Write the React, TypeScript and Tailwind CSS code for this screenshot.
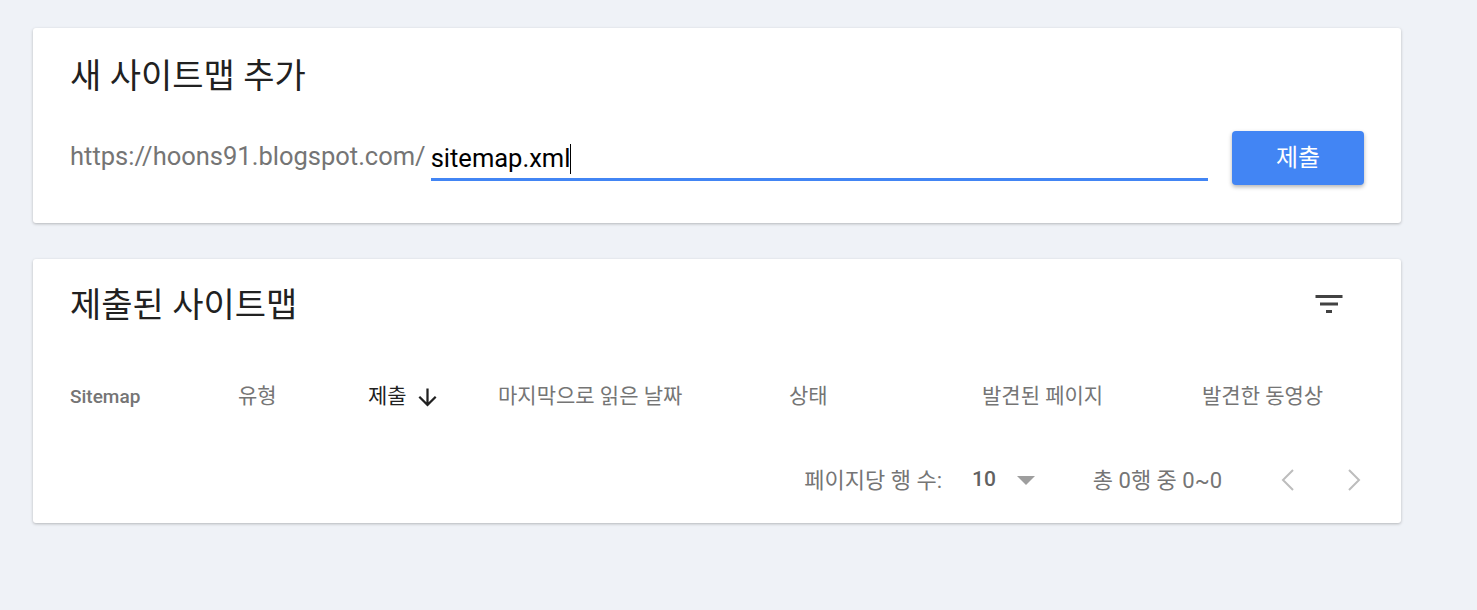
import React from 'react';

const font = { fontFamily: 'Roboto, "Noto Sans CJK KR", sans-serif' };

const columns = [
  { label: 'Sitemap', className: 'text-[19px] font-medium text-[#757575]' },
  { label: '유형', className: 'text-[21px] text-[#757575]' },
  { label: '제출', className: 'text-[21px] text-[#212121]', sorted: true },
  { label: '마지막으로 읽은 날짜', className: 'text-[21px] text-[#757575]' },
  { label: '상태', className: 'text-[21px] text-[#757575]' },
  { label: '발견된 페이지', className: 'text-[21px] text-[#757575]' },
  { label: '발견한 동영상', className: 'text-[21px] text-[#757575]' },
];

function FilterIcon() {
  return (
    <svg viewBox="0 0 24 24" className="h-9 w-9" fill="#424242">
      <path d="M10 18h4v-2h-4v2zM3 6v2h18V6H3zm3 7h12v-2H6v2z" />
    </svg>
  );
}

function Chevron({ dir }: { dir: 'left' | 'right' }) {
  return (
    <svg viewBox="0 0 14 22" className="h-[22px] w-[14px]" fill="none" stroke="#bdbdbd" strokeWidth={2}>
      {dir === 'left' ? <path d="M12 1L2 11l10 10" /> : <path d="M2 1l10 10L2 21" />}
    </svg>
  );
}

export default function App() {
  return (
    <div className="min-h-screen bg-[#eff2f7] pl-[33px] pt-[28px]" style={font}>
      <div className="w-[1368px] h-[195px] bg-white rounded-[3px] shadow-[0_1px_3px_rgba(0,0,0,0.25)] px-[37px] pt-[28px]">
        <h2 className="text-[34px] leading-[40px] text-[#212121]">새 사이트맵 추가</h2>
        <div className="mt-[35px] flex items-center h-[54px]">
          <span className="text-[25.5px] text-[#757575] leading-none mt-[-2px]">https://hoons91.blogspot.com/</span>
          <div className="ml-[5px] flex-1 h-[44px] border-b-[3px] border-[#4285f4] flex items-center mt-[2px]">
            <span className="text-[25.5px] text-black leading-none mt-[2px]">sitemap.xml</span>
            <span className="inline-block w-px h-[30px] bg-black mt-[2px]" />
          </div>
          <button className="ml-[24px] w-[132px] h-[54px] rounded-[4px] bg-[#4285f4] text-white text-[24px] shadow-[0_2px_4px_rgba(0,0,0,0.3)]">
            제출
          </button>
        </div>
      </div>

      <div className="mt-[36px] w-[1368px] h-[264px] bg-white rounded-[3px] shadow-[0_1px_3px_rgba(0,0,0,0.25)]">
        <div className="flex items-center justify-between pl-[37px] pr-[54px] pt-[26px]">
          <h2 className="text-[34px] leading-[36px] text-[#212121] mt-[2px]">제출된 사이트맵</h2>
          <FilterIcon />
        </div>
        <div className="mt-[46px] h-[56px] px-[37px] grid grid-cols-[168px_130px_130px_291px_193px_220px_1fr] items-center">
          {columns.map((c) => (
            <div key={c.label} className={`flex items-center ${c.className}`}>
              {c.label}
              {c.sorted && (
                <svg viewBox="0 0 24 24" className="ml-[7px] h-[27px] w-[27px]" fill="#212121">
                  <path d="M20 12l-1.41-1.41L13 16.17V4h-2v12.17l-5.58-5.59L4 12l8 8 8-8z" />
                </svg>
              )}
            </div>
          ))}
        </div>
        <div className="mt-[27px] h-[56px] flex items-center justify-end pr-[40px] text-[22px] text-[#757575]">
          <span>페이지당 행 수:</span>
          <span className="ml-[30px] text-[21px] font-medium text-[#616161]">10</span>
          <span className="ml-[21px] w-0 h-0 border-l-[9px] border-r-[9px] border-t-[9px] border-l-transparent border-r-transparent border-t-[#9e9e9e]" />
          <span className="ml-[58px]">총 0행 중 0~0</span>
          <span className="ml-[59px] flex items-center">
            <Chevron dir="left" />
          </span>
          <span className="ml-[52px] flex items-center">
            <Chevron dir="right" />
          </span>
        </div>
      </div>
    </div>
  );
}
